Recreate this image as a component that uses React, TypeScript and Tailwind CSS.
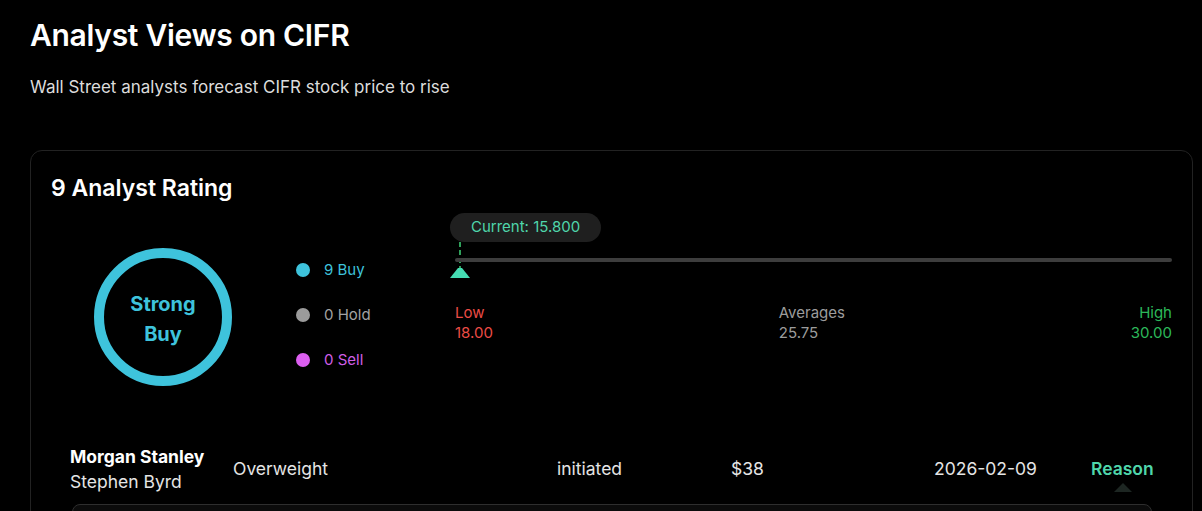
const ratings = [
  { label: "9 Buy", dot: "bg-[#3ec3dc]", text: "text-[#3ec3dc]" },
  { label: "0 Hold", dot: "bg-[#9b9b9b]", text: "text-[#a3a3a3]" },
  { label: "0 Sell", dot: "bg-[#dc5ff0]", text: "text-[#cf5ee6]" },
];

function RatingRing() {
  return (
    <div className="relative ml-[43px] mt-[44px] flex h-[138px] w-[138px] shrink-0 items-center justify-center rounded-full border-[10px] border-[#3ec3dc]">
      <span className="mt-[4px] text-center text-[20px] font-bold leading-[30px] text-[#3ec3dc]">
        Strong
        <br />
        Buy
      </span>
    </div>
  );
}

function PriceTarget() {
  return (
    <div className="ml-[64px] mt-[9px] flex-1">
      <div className="inline-flex h-[29px] items-center rounded-full bg-[#1f1f1f] px-[21px] text-[15px] text-[#4fd6ab]">
        Current: 15.800
      </div>
      <div className="relative h-[36px]">
        {/* dashed marker line */}
        <div className="absolute left-[9px] top-0 h-[27px] w-[2px] bg-[repeating-linear-gradient(to_bottom,#2fa05a_0px,#2fa05a_5px,transparent_5px,transparent_8px)]" />
        <div className="absolute left-[5px] right-0 top-[16px] h-[4px] rounded-full bg-[#3d3d3d]" />
        <svg className="absolute left-0 top-[26px]" width="20" height="10" viewBox="0 0 20 10">
          <path d="M8 0 L12 0 L20 10 L0 10 Z" fill="#44dcb2" />
        </svg>
      </div>
      <div className="ml-[5px] mt-[25px] flex justify-between text-[15px] leading-[20px]">
        <div className="text-[#ec4c46]">
          <div>Low</div>
          <div>18.00</div>
        </div>
        <div className="text-[#9c9c9c]">
          <div>Averages</div>
          <div>25.75</div>
        </div>
        <div className="text-right text-[#2cb85a]">
          <div>High</div>
          <div>30.00</div>
        </div>
      </div>
    </div>
  );
}

export default function App() {
  return (
    <div className="min-h-[511px] overflow-hidden bg-black px-[30px] pt-[16px] font-['Inter',sans-serif] text-white">
      <h1 className="text-[30px] font-semibold leading-[38px] tracking-[-0.3px]">
        Analyst Views on CIFR
      </h1>
      <p className="mt-[21px] text-[17px] leading-[24px] text-[#dcdcdc]">
        Wall Street analysts forecast CIFR stock price to rise
      </p>

      <div className="mt-[51px] mr-[-21px] rounded-xl border border-[#222] bg-black px-5 pt-[21px] pb-10">
        <h2 className="text-[23px] font-semibold leading-[32px]">9 Analyst Rating</h2>

        <div className="flex items-start">
          <RatingRing />
          <div className="ml-[64px] mt-[56px] flex w-[90px] flex-col gap-[25px]">
            {ratings.map((r) => (
              <div key={r.label} className="flex h-5 items-center">
                <span className={`h-[14px] w-[14px] rounded-full ${r.dot}`} />
                <span className={`ml-[14px] text-[15px] ${r.text}`}>{r.label}</span>
              </div>
            ))}
          </div>
          <PriceTarget />
        </div>

        <div className="mt-[58px] grid grid-cols-[163px_324px_174px_203px_157px_1fr] items-center pl-[19px] pr-5 text-[17.5px] text-[#e5e5e5]">
          <div>
            <div className="font-bold leading-[25px] text-white">Morgan Stanley</div>
            <div className="leading-[25px]">Stephen Byrd</div>
          </div>
          <div>Overweight</div>
          <div>initiated</div>
          <div>$38</div>
          <div>2026-02-09</div>
          <div className="relative font-semibold text-[#4fd6ab]">
            Reason
            <span className="absolute left-[23px] top-[27px] h-0 w-0 border-x-[9px] border-b-[9px] border-x-transparent border-b-[#1d2622]" />
          </div>
        </div>

        <div className="ml-[21px] mr-[20px] mt-[10px] h-[60px] rounded-lg border border-[#2e2e2e] bg-[#0b0b0b]" />
      </div>
    </div>
  );
}
